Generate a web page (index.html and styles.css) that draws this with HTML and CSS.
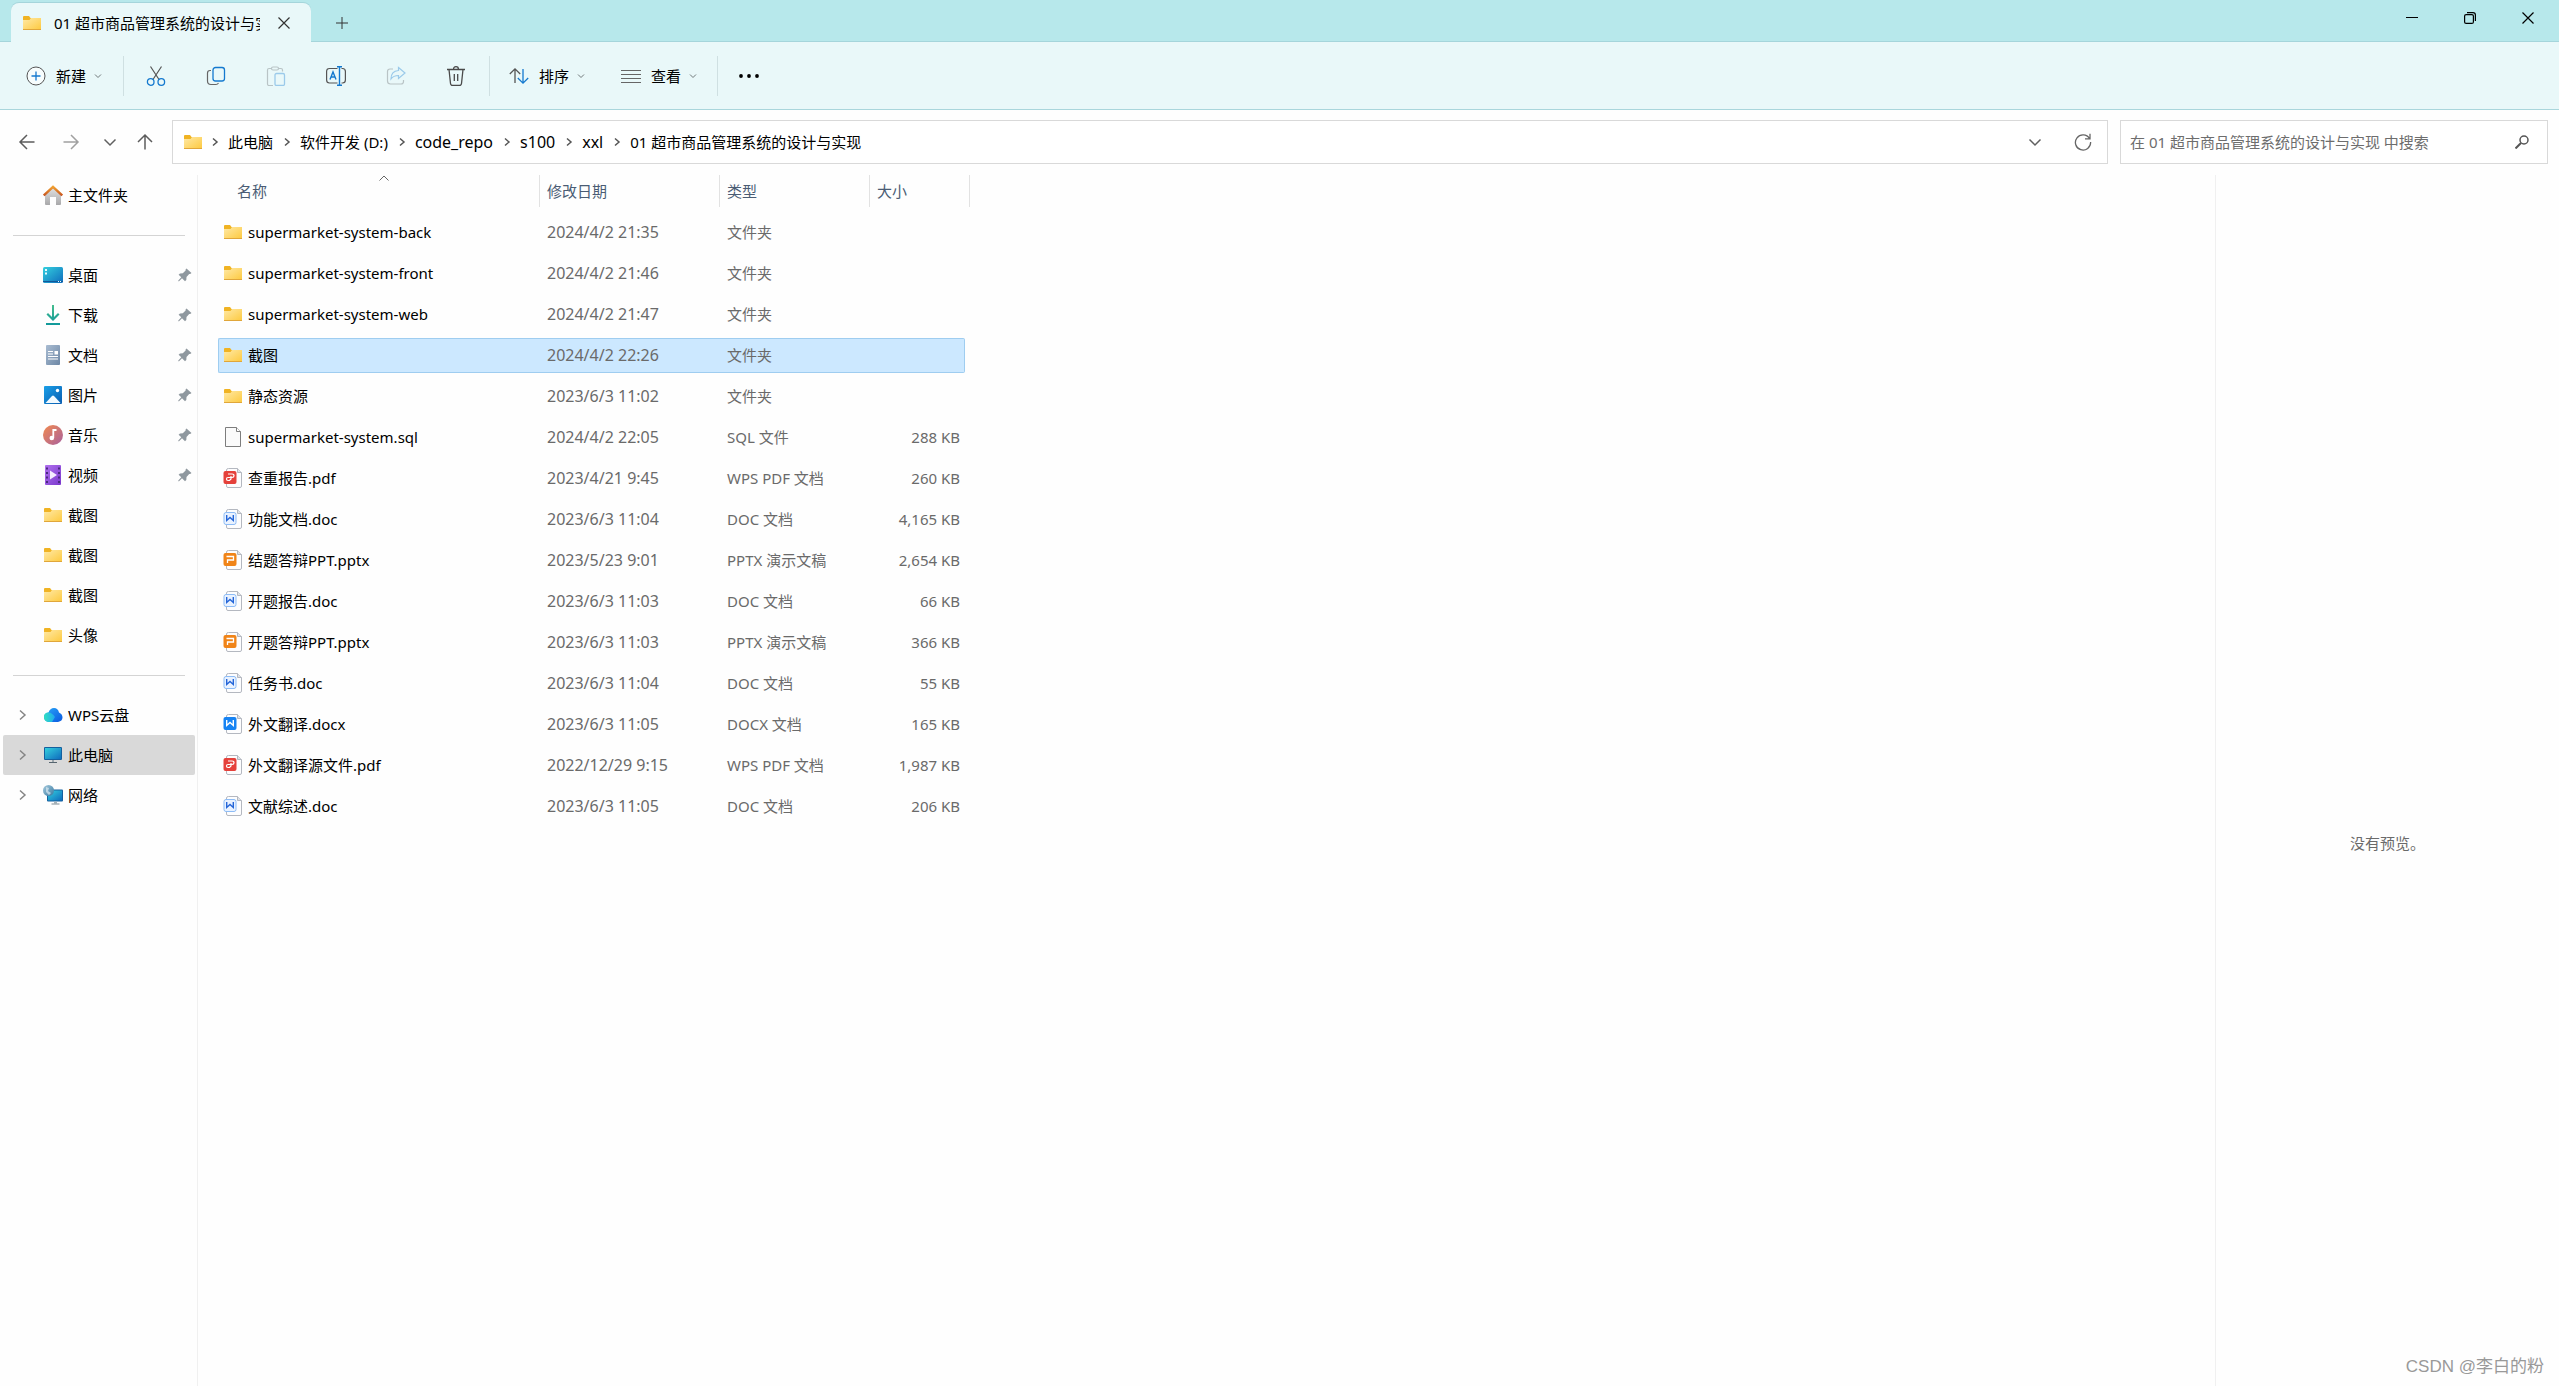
FILE: index.html
```html
<!DOCTYPE html>
<html lang="zh-CN">
<head>
<meta charset="utf-8">
<title>01 超市商品管理系统的设计与实现</title>
<link rel="stylesheet" href="styles.css">
</head>
<body>
<svg class="sprite" aria-hidden="true">
  <defs>
    <linearGradient id="g-folder" x1="0" y1="0" x2="1" y2="1"><stop offset="0" stop-color="#ffe9a6"/><stop offset="1" stop-color="#fdc93e"/></linearGradient>
    <linearGradient id="g-screen" x1="0" y1="0" x2="1" y2="1"><stop offset="0" stop-color="#34d0de"/><stop offset="1" stop-color="#0f6cbd"/></linearGradient>
    <linearGradient id="g-house" x1="0" y1="0" x2="0" y2="1"><stop offset="0" stop-color="#e4e4e4"/><stop offset="1" stop-color="#a8a8aa"/></linearGradient>
    <linearGradient id="g-roof" x1="0" y1="0" x2="0" y2="1"><stop offset="0" stop-color="#f0a030"/><stop offset="1" stop-color="#c85520"/></linearGradient>
    <linearGradient id="g-down" x1="0" y1="0" x2="0" y2="1"><stop offset="0" stop-color="#45bd8d"/><stop offset="1" stop-color="#10989b"/></linearGradient>
    <linearGradient id="g-doc" x1="0" y1="0" x2="1" y2="1"><stop offset="0" stop-color="#a9bcd2"/><stop offset="1" stop-color="#6d87a5"/></linearGradient>
    <linearGradient id="g-pic" x1="0" y1="0" x2="1" y2="1"><stop offset="0" stop-color="#1aa0e8"/><stop offset="1" stop-color="#0a5cb0"/></linearGradient>
    <linearGradient id="g-music" x1="0" y1="0" x2="1" y2="1"><stop offset="0" stop-color="#f28a4e"/><stop offset="1" stop-color="#a8609e"/></linearGradient>
    <linearGradient id="g-video" x1="0" y1="0" x2="1" y2="1"><stop offset="0" stop-color="#b070ee"/><stop offset="1" stop-color="#7a38cc"/></linearGradient>
    <linearGradient id="g-cloud" x1="0" y1="0" x2="1" y2="1"><stop offset="0" stop-color="#2aa8f8"/><stop offset="1" stop-color="#0a58e0"/></linearGradient>
    <linearGradient id="g-cloud2" x1="0" y1="0" x2="1" y2="0"><stop offset="0" stop-color="#30e0c0"/><stop offset="1" stop-color="#20a8f0"/></linearGradient>
    <linearGradient id="g-globe" x1="0" y1="0" x2="1" y2="1"><stop offset="0" stop-color="#a8ccdf"/><stop offset="1" stop-color="#35789f"/></linearGradient>
  </defs>
  <symbol id="folder" viewBox="0 0 20 20"><path d="M1 4q0-1 1-1h5l1.500 2h10.500v3H1z" fill="#f0b323"/><path d="M1 7h6.500l1.500-2h10v12H1z" fill="url(#g-folder)"/><path d="M1 16.500h18" stroke="#e0a63a"/></symbol>
  <symbol id="chev-r" viewBox="0 0 8 12"><path d="M2 2.500l4 3.500-4 3.500" fill="none" stroke="currentColor" stroke-width="1.500"/></symbol>
  <symbol id="chev-d" viewBox="0 0 8 8"><path d="M1 2.500l3 3 3-3" fill="none" stroke="#70787a"/></symbol>
  <symbol id="chev-lg" viewBox="0 0 14 14"><path d="M1.500 4.500l5.500 5.500 5.500-5.500" fill="none" stroke="#606060" stroke-width="1.500"/></symbol>
  <symbol id="twist" viewBox="0 0 8 12"><path d="M1 1.500l5 4.500-5 4.500" fill="none" stroke="#858585" stroke-width="1.500"/></symbol>
  <symbol id="cross" viewBox="0 0 12 12"><path d="M.5.5l11 11M11.500.5l-11 11" fill="none" stroke="currentColor" stroke-width="1.200"/></symbol>
  <symbol id="pin" viewBox="0 0 14 14"><path d="M8.500.5l5 4.500-1.300 1-1 .1-2.700 2.800-.2 3-1.300 1.300-3-3L1 13.200H.3V12.600l3-3.300L.6 6.800 2 5.500l2.800-.2L7.600 2.500l.1-1.200z" fill="#8f989f"/></symbol>
  <symbol id="arrow" viewBox="0 0 18 18"><path d="M16.500 9H2M9 2L2 9l7 7" fill="none" stroke="currentColor" stroke-width="1.500"/></symbol>
  <symbol id="page" viewBox="0 0 20 20"><path d="M5.500.5H14.500l4 4V18q0 1.500-1.500 1.500H5q-1.500 0-1.500-1.500V2Q3.500.5 5.500.5z" fill="#fdfdfe" stroke="#b4b8c0"/><path d="M14.500.5v4h4" fill="#dfe2e7" stroke="#b4b8c0"/></symbol>
  <symbol id="blank" viewBox="0 0 20 20"><path d="M2.500.5h11l4 4v15h-15z" fill="#fafafa" stroke="#7d7d7d"/><path d="M13.500.5v4h4" fill="#fff" stroke="#7d7d7d"/></symbol>
  <symbol id="pdf" viewBox="0 0 20 20"><use href="#page"/><rect x=".5" y="3" width="13" height="13" rx="2" fill="#e5413b"/><path d="M5 6h4q2 0 2 1.700T9 9.500H5Q3.500 9.500 3.500 11T5 12.500h1.500L8 11V8" fill="none" stroke="#fff" stroke-width="1.200"/></symbol>
  <symbol id="doc" viewBox="0 0 20 20"><use href="#page"/><rect x="1" y="3.500" width="12" height="12" rx="2" fill="#e9f2ff" stroke="#8dbcf6"/><path d="M3.700 6v5.500L7 8.500l3.300 3V6" fill="none" stroke="#2465d8" stroke-width="1.400"/></symbol>
  <symbol id="docx" viewBox="0 0 20 20"><use href="#page"/><rect x=".5" y="3" width="13" height="13" rx="2" fill="#1683f3"/><path d="M3.700 6v5.500L7 8.500l3.300 3V6" fill="none" stroke="#fff" stroke-width="1.400"/></symbol>
  <symbol id="ppt" viewBox="0 0 20 20"><use href="#page"/><rect x=".5" y="3" width="13" height="13" rx="2" fill="#f08418"/><path d="M3.500 6.500h7V10h-6v3" fill="none" stroke="#fff" stroke-width="1.300"/></symbol>
  <symbol id="monitor" viewBox="0 0 20 20"><rect x="1" y="2" width="18" height="13" rx="1" fill="#14609f"/><rect x="2" y="3" width="16" height="11" fill="url(#g-screen)"/><path d="M9 15h2v2H9z" fill="#9aa4ab"/><path d="M6 17.500h8" stroke="#56656f"/></symbol>
</svg>

<header class="titlebar">
  <div class="tab">
    <svg class="ico"><use href="#folder"/></svg>
    <span class="tab-title">01 超市商品管理系统的设计与实现</span>
    <button class="tab-close" aria-label="关闭标签页"><svg class="ico-x"><use href="#cross"/></svg></button>
  </div>
  <button class="tab-new" aria-label="新建标签页"><svg class="ico-x" viewBox="0 0 12 12"><path d="M6 0v12M0 6h12" stroke="#333"/></svg></button>
  <div class="window-controls">
    <button aria-label="最小化"><svg class="ico-x" viewBox="0 0 12 12"><path d="M0 5.500h12" stroke="#000"/></svg></button>
    <button aria-label="还原"><svg class="ico-x" viewBox="0 0 12 12"><rect x=".6" y="2.600" width="8.800" height="8.800" rx="1.500" fill="none" stroke="#000" stroke-width="1.200"/><path d="M3 .6h6q2.400 0 2.400 2.400v6" fill="none" stroke="#000" stroke-width="1.200"/></svg></button>
    <button aria-label="关闭"><svg class="ico-x"><use href="#cross"/></svg></button>
  </div>
</header>

<div class="toolbar">
  <button class="cmd cmd-new"><svg class="ico" viewBox="0 0 20 20"><circle cx="10" cy="10" r="9" fill="#f7fdfd" stroke="#555"/><path d="M10 5.500v9M5.500 10h9" stroke="#1479cf" stroke-width="1.300"/></svg><span>新建</span><svg class="ico-s"><use href="#chev-d"/></svg></button>
  <span class="rule"></span>
  <div class="cmd-group">
    <button class="cmd-icon" aria-label="剪切"><svg class="ico" viewBox="0 0 20 20"><path d="M4.500.5l8.500 13M15.500.5L7 13.500" fill="none" stroke="#555" stroke-width="1.200"/><circle cx="4.700" cy="16" r="3.300" fill="none" stroke="#1479cf" stroke-width="1.300"/><circle cx="15.300" cy="16" r="3.300" fill="none" stroke="#1479cf" stroke-width="1.300"/></svg></button>
    <button class="cmd-icon" aria-label="复制"><svg class="ico" viewBox="0 0 20 20"><path d="M5 4.500H4Q1.500 4.500 1.500 7v8q0 3.500 3.500 3.500h5q1.500 0 2.500-1.500" fill="none" stroke="#666" stroke-width="1.200"/><rect x="7" y="1.500" width="11.500" height="13.500" rx="2.500" fill="none" stroke="#1479cf" stroke-width="1.300"/></svg></button>
    <button class="cmd-icon" aria-label="粘贴" disabled><svg class="ico" viewBox="0 0 20 20"><path d="M5.500 2.500H3Q1.500 2.500 1.500 4v14q0 1.500 1.500 1.500h4M12.500 2.500H15q1.500 0 1.500 1.500v1.500" fill="none" stroke="#b9c4c6" stroke-width="1.200"/><rect x="5.500" y="1" width="7" height="3" rx="1.500" fill="none" stroke="#b9c4c6" stroke-width="1.200"/><rect x="9" y="7.500" width="9.500" height="12" rx="1.500" fill="none" stroke="#9bcaea" stroke-width="1.300"/></svg></button>
    <button class="cmd-icon" aria-label="重命名"><svg class="ico" viewBox="0 0 20 20"><path d="M11.500 2.500h-8Q.6 2.500.6 5.500v8.500q0 3 2.900 3h8M15.500 2.500h1q2.900 0 2.900 3v8.500q0 3-2.900 3h-1" fill="none" stroke="#555" stroke-width="1.200"/><path d="M4 13.500L7 6l3 7.500M5 11h4M13.500.7v18.600M11 .7h5M11 19.300h5" fill="none" stroke="#1479cf" stroke-width="1.400"/></svg></button>
    <button class="cmd-icon" aria-label="共享" disabled><svg class="ico" viewBox="0 0 20 20"><path d="M7 3H4Q1.500 3 1.500 5.500V15Q1.500 18 4.500 18h10.500q2.500 0 2.500-2.500V14" fill="none" stroke="#b9c4c6" stroke-width="1.200"/><path d="M12.500 1.500l6.500 5.500-6.500 5.500V9.500q-5 0-7.500 3.500 0-8 7.500-8.500z" fill="none" stroke="#9bcaea" stroke-width="1.200"/></svg></button>
    <button class="cmd-icon" aria-label="删除"><svg class="ico" viewBox="0 0 20 20"><path d="M1 3.500h18M3 3.500l1.500 14q.2 2 2 2h7q1.800 0 2-2l1.500-14M7.500 3.500q0-2.800 2.500-2.800t2.500 2.800M8.300 8v7M11.700 8v7" fill="none" stroke="#4a4a4a" stroke-width="1.300"/></svg></button>
  </div>
  <span class="rule"></span>
  <button class="cmd cmd-sort"><svg class="ico" viewBox="0 0 20 20"><path d="M6 17V3M.8 8L6 2.800 11.200 8" fill="none" stroke="#555" stroke-width="1.300"/><path d="M14 3v14M8.800 12l5.200 5.200 5.200-5.200" fill="none" stroke="#1479cf" stroke-width="1.300"/></svg><span>排序</span><svg class="ico-s"><use href="#chev-d"/></svg></button>
  <button class="cmd cmd-view"><svg class="ico" viewBox="0 0 20 20"><path d="M0 4.500h20M0 8.500h20M0 12.500h20M0 16.500h20" stroke="#666"/></svg><span>查看</span><svg class="ico-s"><use href="#chev-d"/></svg></button>
  <span class="rule"></span>
  <button class="cmd cmd-more" aria-label="查看更多"><svg class="ico" viewBox="0 0 20 20"><circle cx="2" cy="10" r="1.900"/><circle cx="10" cy="10" r="1.900"/><circle cx="18" cy="10" r="1.900"/></svg></button>
</div>

<div class="addressbar">
  <div class="history">
    <button aria-label="后退"><svg class="ico-n"><use href="#arrow"/></svg></button>
    <button aria-label="前进" disabled><svg class="ico-n flip"><use href="#arrow"/></svg></button>
    <button class="recent" aria-label="最近浏览的位置"><svg class="ico-m"><use href="#chev-lg"/></svg></button>
    <button class="parent" aria-label="向上"><svg class="ico-n up"><use href="#arrow"/></svg></button>
  </div>
  <nav class="path" aria-label="路径">
    <svg class="ico"><use href="#folder"/></svg>
    <svg class="sep"><use href="#chev-r"/></svg><a href="#">此电脑</a>
    <svg class="sep"><use href="#chev-r"/></svg><a href="#">软件开发 (D:)</a>
    <svg class="sep"><use href="#chev-r"/></svg><a class="latin" href="#">code_repo</a>
    <svg class="sep"><use href="#chev-r"/></svg><a class="latin" href="#">s100</a>
    <svg class="sep"><use href="#chev-r"/></svg><a class="latin" href="#">xxl</a>
    <svg class="sep"><use href="#chev-r"/></svg><a href="#">01 超市商品管理系统的设计与实现</a>
    <div class="path-tools">
      <button aria-label="以前的位置"><svg class="ico-m"><use href="#chev-lg"/></svg></button>
      <button aria-label="刷新"><svg class="ico-n" viewBox="0 0 18 18"><path d="M15.500 5.500A7.600 7.600 0 1 0 16.600 9M16 .8v5h-5" fill="none" stroke="#666" stroke-width="1.300"/></svg></button>
    </div>
  </nav>
  <div class="search">
    <input type="search" aria-label="搜索" placeholder="在 01 超市商品管理系统的设计与实现 中搜索">
    <button aria-label="搜索"><svg class="ico-m" viewBox="0 0 14 14"><circle cx="9" cy="5" r="4" fill="none" stroke="#555" stroke-width="1.500"/><path d="M6 8L.5 13.500" stroke="#555" stroke-width="2"/></svg></button>
  </div>
</div>

<div class="content">
  <nav class="sidebar" aria-label="导航窗格">
    <a class="item" href="#"><svg class="ico" viewBox="0 0 20 20"><path d="M2 9l8-7 8 7v10q0 1-1 1h-4v-8H7v8H3q-1 0-1-1z" fill="url(#g-house)"/><path d="M.8 10.500L10 1.800l9.200 8.700" fill="none" stroke="url(#g-roof)" stroke-width="2.400"/></svg>主文件夹</a>
    <hr>
    <a class="item" href="#"><svg class="ico" viewBox="0 0 20 20"><rect y="2" width="20" height="16" rx="1.500" fill="url(#g-screen)"/><path d="M0 16.500h20" stroke="#12589a"/><path d="M2 4h2v2H2zM2 7.500h2v2H2zM15 16h1v1h-1zM17 16h1v1h-1z" fill="#e8fbff"/></svg>桌面<svg class="pin"><use href="#pin"/></svg></a>
    <a class="item" href="#"><svg class="ico" viewBox="0 0 20 20"><path d="M9 0h2v12l4-4 1.500 1.500L10 16 3.500 9.500 5 8l4 4zM3 18h14v2H3z" fill="url(#g-down)"/></svg>下载<svg class="pin"><use href="#pin"/></svg></a>
    <a class="item" href="#"><svg class="ico" viewBox="0 0 20 20"><rect x="3" width="14" height="20" rx="1" fill="url(#g-doc)"/><path d="M5 6.500h5M5 9h5M5 11.500h10M5 14h10" stroke="#fff" stroke-width="1.200"/><path d="M11.500 6h3.500v3.500h-3.500z" fill="#fff"/></svg>文档<svg class="pin"><use href="#pin"/></svg></a>
    <a class="item" href="#"><svg class="ico" viewBox="0 0 20 20"><rect x="1" y="1" width="18" height="18" rx="1" fill="url(#g-pic)"/><path d="M2.500 18L9 11q1-1 2 0l6.500 7z" fill="#f2faff"/><circle cx="14.500" cy="5.500" r="1.700" fill="#fff"/></svg>图片<svg class="pin"><use href="#pin"/></svg></a>
    <a class="item" href="#"><svg class="ico" viewBox="0 0 20 20"><circle cx="10" cy="10" r="10" fill="url(#g-music)"/><circle cx="8.800" cy="13" r="2.300" fill="#fff"/><path d="M10.300 13V5h3.200" fill="none" stroke="#fff" stroke-width="1.800"/></svg>音乐<svg class="pin"><use href="#pin"/></svg></a>
    <a class="item" href="#"><svg class="ico" viewBox="0 0 20 20"><rect x="2" width="16" height="20" rx="1" fill="url(#g-video)"/><path d="M4 2.500v16M16 2.500v16" stroke="#4a2a80" stroke-width="2" stroke-dasharray="2 2.500"/><path d="M7 5.500l7 4.500-7 4.500z" fill="#f4ecff"/></svg>视频<svg class="pin"><use href="#pin"/></svg></a>
    <a class="item" href="#"><svg class="ico"><use href="#folder"/></svg>截图</a>
    <a class="item" href="#"><svg class="ico"><use href="#folder"/></svg>截图</a>
    <a class="item" href="#"><svg class="ico"><use href="#folder"/></svg>截图</a>
    <a class="item" href="#"><svg class="ico"><use href="#folder"/></svg>头像</a>
    <hr>
    <a class="item tree" href="#"><svg class="sep"><use href="#twist"/></svg><svg class="ico" viewBox="0 0 20 20"><path d="M5.500 17Q1 16 1 12t4.500-4.500Q7 3 11 3t5 4.500Q19.500 9 19.500 12.500T15 17z" fill="url(#g-cloud)"/><path d="M5.500 17Q1 16.500 1 12t4.500-4.500Q9 7.500 12 12l-3 5z" fill="url(#g-cloud2)"/></svg>WPS云盘</a>
    <a class="item tree current" href="#"><svg class="sep"><use href="#twist"/></svg><svg class="ico"><use href="#monitor"/></svg>此电脑</a>
    <a class="item tree" href="#"><svg class="sep"><use href="#twist"/></svg><svg class="ico" viewBox="0 0 20 20"><rect x="4" y="4.500" width="16" height="12" rx="1" fill="#14609f"/><rect x="5" y="5.500" width="14" height="10" fill="url(#g-screen)"/><path d="M11 16.500h3v2h-3z" fill="#a3b0b8"/><path d="M8.500 19h8" stroke="#7d8a92"/><circle cx="5.500" cy="5.500" r="5.500" fill="url(#g-globe)"/><path d="M3 2l3 1-1 3 3 2-2 2-3-3z" fill="#dbeaf2" opacity=".7"/></svg>网络</a>
  </nav>

  <main class="files">
    <svg class="sort-mark" viewBox="0 0 10 6"><path d="M.5 5.500L5 1l4.500 4.500" fill="none" stroke="#666"/></svg>
    <table>
      <colgroup><col class="c-name"><col class="c-date"><col class="c-type"><col class="c-size"></colgroup>
      <thead><tr><th class="first"><button>名称</button></th><th><button>修改日期</button></th><th><button>类型</button></th><th class="last"><button>大小</button></th></tr></thead>
      <tbody>
        <tr><td><span class="name"><svg class="ico"><use href="#folder"/></svg>supermarket-system-back</span></td><td class="date">2024/4/2 21:35</td><td>文件夹</td><td></td></tr>
        <tr><td><span class="name"><svg class="ico"><use href="#folder"/></svg>supermarket-system-front</span></td><td class="date">2024/4/2 21:46</td><td>文件夹</td><td></td></tr>
        <tr><td><span class="name"><svg class="ico"><use href="#folder"/></svg>supermarket-system-web</span></td><td class="date">2024/4/2 21:47</td><td>文件夹</td><td></td></tr>
        <tr class="selected"><td><span class="name"><svg class="ico"><use href="#folder"/></svg>截图</span></td><td class="date">2024/4/2 22:26</td><td>文件夹</td><td></td></tr>
        <tr><td><span class="name"><svg class="ico"><use href="#folder"/></svg>静态资源</span></td><td class="date">2023/6/3 11:02</td><td>文件夹</td><td></td></tr>
        <tr><td><span class="name"><svg class="ico"><use href="#blank"/></svg>supermarket-system.sql</span></td><td class="date">2024/4/2 22:05</td><td>SQL 文件</td><td>288 KB</td></tr>
        <tr><td><span class="name"><svg class="ico"><use href="#pdf"/></svg>查重报告.pdf</span></td><td class="date">2023/4/21 9:45</td><td>WPS PDF 文档</td><td>260 KB</td></tr>
        <tr><td><span class="name"><svg class="ico"><use href="#doc"/></svg>功能文档.doc</span></td><td class="date">2023/6/3 11:04</td><td>DOC 文档</td><td>4,165 KB</td></tr>
        <tr><td><span class="name"><svg class="ico"><use href="#ppt"/></svg>结题答辩PPT.pptx</span></td><td class="date">2023/5/23 9:01</td><td>PPTX 演示文稿</td><td>2,654 KB</td></tr>
        <tr><td><span class="name"><svg class="ico"><use href="#doc"/></svg>开题报告.doc</span></td><td class="date">2023/6/3 11:03</td><td>DOC 文档</td><td>66 KB</td></tr>
        <tr><td><span class="name"><svg class="ico"><use href="#ppt"/></svg>开题答辩PPT.pptx</span></td><td class="date">2023/6/3 11:03</td><td>PPTX 演示文稿</td><td>366 KB</td></tr>
        <tr><td><span class="name"><svg class="ico"><use href="#doc"/></svg>任务书.doc</span></td><td class="date">2023/6/3 11:04</td><td>DOC 文档</td><td>55 KB</td></tr>
        <tr><td><span class="name"><svg class="ico"><use href="#docx"/></svg>外文翻译.docx</span></td><td class="date">2023/6/3 11:05</td><td>DOCX 文档</td><td>165 KB</td></tr>
        <tr><td><span class="name"><svg class="ico"><use href="#pdf"/></svg>外文翻译源文件.pdf</span></td><td class="date">2022/12/29 9:15</td><td>WPS PDF 文档</td><td>1,987 KB</td></tr>
        <tr><td><span class="name"><svg class="ico"><use href="#doc"/></svg>文献综述.doc</span></td><td class="date">2023/6/3 11:05</td><td>DOC 文档</td><td>206 KB</td></tr>
      </tbody>
    </table>
  </main>

  <aside class="preview">没有预览。</aside>
</div>
<div class="watermark">CSDN @李白的粉</div>
</body>
</html>
```
FILE: styles.css
```css
* { box-sizing: border-box; }

body {
  margin: 0;
  min-height: 100vh;
  display: flex;
  flex-direction: column;
  position: relative;
  background: #fefefe;
  color: #000;
  font: 15px/20px "Noto Sans", "Noto Sans CJK SC", sans-serif;
}

button {
  display: flex;
  align-items: center;
  justify-content: center;
  margin: 0;
  padding: 0;
  border: 0;
  background: none;
  color: inherit;
  font: inherit;
}

a { color: inherit; text-decoration: none; }
svg { display: block; flex: none; }

.sprite { position: absolute; width: 0; height: 0; }
.ico { width: 20px; height: 20px; }
.ico-n { width: 18px; height: 18px; }
.ico-m { width: 14px; height: 14px; }
.ico-x { width: 12px; height: 12px; }
.ico-s { width: 8px; height: 8px; }
.sep { width: 8px; height: 12px; }
.flip { transform: rotate(180deg); }
.up { transform: rotate(90deg); }

/* Title bar */
.titlebar {
  display: flex;
  height: 42px;
  padding-left: 11px;
  background: #b7e8eb;
  box-shadow: inset 0 -1px #a5d5db;
}
.tab {
  display: flex;
  align-items: center;
  width: 300px;
  height: 39px;
  margin-top: 3px;
  padding: 0 10px 0 11px;
  border-radius: 8px 8px 0 0;
  background: #e9f8f9;
  box-shadow: 0 -1px #a5d5db;
}
.tab-title {
  width: 206px;
  margin-left: 12px;
  overflow: hidden;
  white-space: nowrap;
}
.tab-close { width: 34px; height: 32px; margin-left: auto; color: #333; }
.tab-new { width: 62px; height: 42px; padding-top: 3px; }
.window-controls { display: flex; margin: 0 2px 0 auto; }
.window-controls button { width: 58px; height: 36px; }

/* Command bar */
.toolbar {
  display: flex;
  align-items: center;
  height: 68px;
  padding-left: 26px;
  background: #e9f8f9;
  border-bottom: 1px solid #a9d6dc;
}
.rule { width: 1px; height: 40px; background: #cfe0e2; }
.cmd { height: 40px; gap: 10px; }
.cmd .ico-s { margin-left: -2px; }
.cmd-new { margin-right: 21px; }
.cmd-group { display: flex; margin: 0 3px 0 2px; }
.cmd-icon { width: 60px; height: 40px; }
.cmd-sort { margin-left: 19px; }
.cmd-view { margin: 0 20px 0 36px; }
.cmd-more { margin-left: 21px; }

/* Address row */
.addressbar {
  display: flex;
  align-items: center;
  gap: 6px;
  padding: 10px 11px 5px 8px;
}
.history { flex: none; display: flex; color: #5c5c5c; }
.history button { width: 38px; height: 40px; }
.history button:disabled { margin: 0 6px; color: #a0a0a0; }
.history .recent { width: 28px; }
.history .parent { width: 42px; }
.path, .search {
  display: flex;
  align-items: center;
  height: 44px;
  border: 1px solid #d9d9d9;
  background: #fff;
}
.path { flex: 1; padding: 0 0 1px 10px; }
.path .sep { margin: 0 9px 0 10px; color: #555; }
.path .ico + .sep { margin-left: 8px; }
.latin { font-size: 16px; }
.path-tools { display: flex; margin-left: auto; color: #666; }
.path-tools button { width: 48px; height: 40px; }
.search { width: 428px; margin-left: 6px; padding-left: 9px; }
.search input {
  flex: 1;
  height: 40px;
  padding: 0;
  border: 0;
  outline: 0;
  background: none;
  font: inherit;
}
.search input::placeholder { color: #6d6d6d; opacity: 1; }
.search button { width: 50px; height: 40px; }

/* Panes */
.content { flex: 1; display: flex; }
.sidebar {
  width: 198px;
  margin-top: 6px;
  padding: 0 2px 0 3px;
  border-right: 1px solid #f0f0f0;
}
.item {
  display: flex;
  align-items: center;
  gap: 5px;
  height: 40px;
  padding: 0 3px 1px 40px;
  border-radius: 2px;
}
.item .pin { width: 14px; height: 14px; margin-left: auto; }
.tree { padding-left: 16px; }
.tree .sep { margin-right: 11px; }
.current { background: #d9d9d9; }
.sidebar hr {
  height: 1px;
  margin: 20px 10px 19px;
  border: 0;
  background: #d4d4d4;
}

/* File list */
.files { flex: 1; position: relative; padding-left: 20px; }
.sort-mark {
  position: absolute;
  left: 181px;
  top: 6px;
  width: 10px;
  height: 6px;
}
table {
  width: 747px;
  table-layout: fixed;
  border-collapse: separate;
  border-spacing: 0 6px;
}
.c-name { width: 322px; }
.c-date { width: 180px; }
.c-type { width: 150px; }
.c-size { width: 95px; }
th { height: 34px; padding: 0; vertical-align: top; font-weight: 400; }
th button {
  width: 100%;
  height: 32px;
  padding: 0 0 1px 7px;
  justify-content: flex-start;
  border-right: 1px solid #e2e2e2;
  color: #4a5c74;
}
.first button { padding-left: 19px; }
.last button { width: 100px; }
td { height: 35px; padding: 0 0 2px 7px; color: #6a6a6a; }
td:first-child { padding-left: 5px; color: #000; }
td:last-child { padding: 0 5px 2px 0; text-align: right; }
.name { display: flex; align-items: center; gap: 5px; }
.date { font-size: 16px; }
.selected td {
  background: #cce8ff;
  border: 1px solid #9fcdf0;
  border-width: 1px 0;
}
.selected td:first-child { padding-left: 4px; border-left-width: 1px; border-radius: 2px 0 0 2px; }
.selected td:last-child { border-right-width: 1px; border-radius: 0 2px 2px 0; }

.preview {
  display: flex;
  align-items: center;
  justify-content: center;
  width: 344px;
  margin-top: 6px;
  padding-top: 125px;
  border-left: 1px solid #f0f0f0;
  color: #6a6a6a;
}
.watermark {
  position: absolute;
  right: 15px;
  bottom: 7px;
  color: #999;
  font: 17px/24px "Liberation Sans", "Noto Sans CJK SC", sans-serif;
}
```
